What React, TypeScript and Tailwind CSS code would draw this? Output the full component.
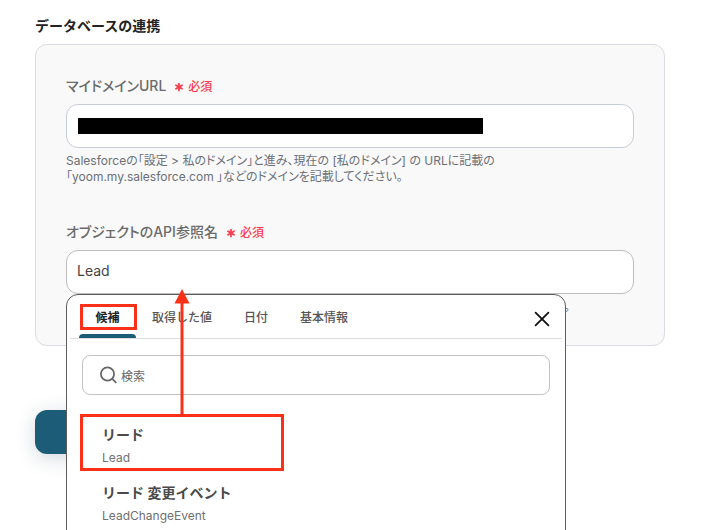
import { Asterisk } from 'lucide-react';
import type { ReactNode } from 'react';

interface FieldLabelProps {
  htmlFor: string;
  children: ReactNode;
}

interface Suggestion {
  label: string;
  apiName: string;
}

const tabs = ['候補', '取得した値', '日付', '基本情報'];

const suggestions: Suggestion[] = [
  { label: 'リード', apiName: 'Lead' },
  { label: 'リード 変更イベント', apiName: 'LeadChangeEvent' },
];

const FieldLabel = ({ htmlFor, children }: FieldLabelProps) => (
  <label htmlFor={htmlFor} className="mb-1.5 flex h-6 items-center gap-0.5 text-sm font-medium text-[#6b6b6b]">
    <span className="pr-1 [font-feature-settings:'palt']">{children}</span>
    <span className="flex items-center gap-0.5 pt-0.5 text-xs text-[#fb3a4e]">
      <Asterisk className="h-3.5 w-3.5" strokeWidth={3} />
      必須
    </span>
  </label>
);

const SearchIcon = () => (
  <svg className="h-[18px] w-[18px] shrink-0" viewBox="0 0 18 18" fill="none" stroke="#666" strokeWidth="1.8">
    <circle cx="8.5" cy="8" r="6.6" />
    <path d="M13.1 12.6 17.3 16.8" />
  </svg>
);

const SuggestionMenu = () => (
  <div className="absolute top-full left-0 h-80 w-[500px] rounded-t-xl border border-[#5c5c5c] bg-white">
    <div className="mx-[3px] flex h-11 border-b border-[#dedede] pl-[9px]" role="tablist">
      {tabs.map((tab, index) => (
        <button
          key={tab}
          type="button"
          role="tab"
          aria-selected={index === 0}
          className={
            index === 0
              ? 'relative h-full w-[57px] pt-[3px] text-xs font-bold text-[#222]'
              : 'h-full px-4 pt-[3px] text-xs font-medium text-[#555]'
          }
        >
          {tab}
          {index === 0 && (
            <>
              <span className="absolute inset-x-0 bottom-0 h-1 rounded-t bg-[#1c5c77]" />
              {/* Highlighted tab */}
              <span className="absolute top-[9px] left-px h-[26px] w-full border-3 border-[#fb3018]" />
            </>
          )}
        </button>
      ))}
      <button type="button" aria-label="閉じる" className="mt-1 mr-2.5 ml-auto flex w-5 items-center justify-center">
        <svg className="h-4 w-4" viewBox="0 0 16 16" stroke="#111" strokeWidth="1.8" strokeLinecap="round">
          <path d="M1.6 1.6 14.4 14.4M14.4 1.6 1.6 14.4" />
        </svg>
      </button>
    </div>

    <div className="mx-[15px] mt-4 flex h-10 items-center gap-1 rounded-lg border border-[#c2c2c2] px-4">
      <SearchIcon />
      <input
        type="text"
        aria-label="検索"
        placeholder="検索"
        className="w-full bg-transparent pt-1 text-xs outline-none placeholder:text-[#666]"
      />
    </div>

    <ul className="relative mt-5 px-[15px]">
      {suggestions.map(item => (
        <li key={item.apiName}>
          <button type="button" className="block h-[58px] w-full px-5 pt-1 text-left">
            <span className="block text-sm leading-5 font-semibold text-[#4a4a4a]">{item.label}</span>
            <span className="mt-[3px] block text-xs leading-5 text-[#707070]">{item.apiName}</span>
          </button>
        </li>
      ))}
      {/* Highlighted suggestion */}
      <li aria-hidden="true" className="absolute top-[-1px] left-[13px] h-[57px] w-[204px] border-3 border-[#fb3018]" />
    </ul>

    {/* Arrow from the suggestion up to the field */}
    <svg className="absolute -top-1.5 left-[107px] h-[127px] w-4" viewBox="0 0 16 127" fill="#fb3018">
      <path d="M8 0 15.5 14.5H.5Z" />
      <path d="M6.5 13h3v114h-3z" />
    </svg>
  </div>
);

const App = () => {
  return (
    <main className="h-screen overflow-hidden bg-white pt-4 pr-10 pl-[35px] font-['Inter','Noto_Sans_CJK_JP',sans-serif]" lang="ja">
      <h2 className="mb-2 text-sm leading-5 font-semibold text-[#222]">データベースの連携</h2>

      <section className="rounded-xl border border-[#d9dce3] bg-[#f9f9f9] px-[30px] pt-[29px] pb-[30px]">
        <FieldLabel htmlFor="domain">マイドメインURL</FieldLabel>
        <div className="relative">
          <input
            id="domain"
            type="text"
            className="block h-11 w-full rounded-xl border border-[#c7ccd6] bg-white px-2.5 text-sm outline-none"
          />
          {/* Masked value */}
          <span className="absolute top-3.5 left-3 h-4 w-[405px] bg-black" />
        </div>
        <p className="mt-[5px] text-xs leading-4 text-[#6b7078] [font-feature-settings:'palt']">
          Salesforceの「設定 &gt; 私のドメイン」と進み、現在の [私のドメイン] の URLに記載の
          <br />
          「yoom.my.salesforce.com 」などのドメインを記載してください。
        </p>

        <div className="mt-[35px]">
          <FieldLabel htmlFor="object">オブジェクトのAPI参照名</FieldLabel>
          <div className="relative">
            <input
              id="object"
              type="text"
              defaultValue="Lead"
              className="block h-11 w-full rounded-xl border border-[#bdbdbd] bg-white px-2.5 pb-1 text-sm text-[#444] outline-none"
            />
            <SuggestionMenu />
          </div>
          <p className="mt-[5px] w-[510px] text-right text-xs leading-4 text-[#6b7078]">。</p>
        </div>
      </section>

      <button
        type="button"
        aria-label="テスト"
        className="mt-16 block h-11 w-40 rounded-xl bg-[#1c5c77] shadow-[0_4px_20px_rgba(28,60,80,0.2)]"
      />
    </main>
  );
};

export default App;
